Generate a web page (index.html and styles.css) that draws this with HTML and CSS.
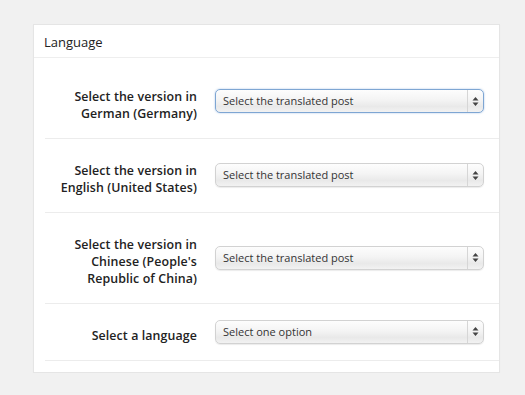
FILE: index.html
```html
<!DOCTYPE html>
<html lang="en">
<head>
<meta charset="utf-8">
<title>Language</title>
<link rel="stylesheet" href="styles.css">
</head>
<body>
<div class="panel">
  <div class="panel-header">Language</div>
  <div class="panel-body">
    <div class="row">
      <div class="label">Select the version in<br>German (Germany)</div>
      <div class="select focused">
        <span class="select-text">Select the translated post</span>
        <span class="select-arrows"><svg width="7" height="11" viewBox="0 0 7 11"><path d="M3.5 1 L6.5 4.5 H0.5 Z M3.5 10 L6.5 6.5 H0.5 Z" fill="#444"/></svg></span>
      </div>
    </div>
    <div class="row">
      <div class="label">Select the version in<br>English (United States)</div>
      <div class="select">
        <span class="select-text">Select the translated post</span>
        <span class="select-arrows"><svg width="7" height="11" viewBox="0 0 7 11"><path d="M3.5 1 L6.5 4.5 H0.5 Z M3.5 10 L6.5 6.5 H0.5 Z" fill="#444"/></svg></span>
      </div>
    </div>
    <div class="row">
      <div class="label">Select the version in<br>Chinese (People's<br>Republic of China)</div>
      <div class="select">
        <span class="select-text">Select the translated post</span>
        <span class="select-arrows"><svg width="7" height="11" viewBox="0 0 7 11"><path d="M3.5 1 L6.5 4.5 H0.5 Z M3.5 10 L6.5 6.5 H0.5 Z" fill="#444"/></svg></span>
      </div>
    </div>
    <div class="row">
      <div class="label">Select a language</div>
      <div class="select">
        <span class="select-text">Select one option</span>
        <span class="select-arrows"><svg width="7" height="11" viewBox="0 0 7 11"><path d="M3.5 1 L6.5 4.5 H0.5 Z M3.5 10 L6.5 6.5 H0.5 Z" fill="#444"/></svg></span>
      </div>
    </div>
  </div>
</div>
</body>
</html>
```
FILE: styles.css
```css
html, body {
  margin: 0;
  padding: 0;
  background: #f1f1f1;
  font-family: "Open Sans", "Liberation Sans", sans-serif;
  color: #222;
}

.panel {
  margin: 24px 0 0 33px;
  width: 467px;
  box-sizing: border-box;
  background: #fff;
  border: 1px solid #e5e5e5;
  box-shadow: 0 1px 1px rgba(0,0,0,0.04);
}

.panel-header {
  height: 33px;
  box-sizing: border-box;
  padding: 8px 0 0 10px;
  font-size: 13px;
  line-height: 18px;
  color: #222;
  border-bottom: 1px solid #eeeeee;
}

.panel-body {
  padding: 7px 0 11px 11px;
}

.row {
  display: grid;
  grid-template-columns: 152px 269px;
  column-gap: 18px;
  align-items: center;
  padding: 23px 0 16px 0;
  border-bottom: 1px solid #ececec;
}

.label {
  text-align: right;
  font-size: 12.4px;
  letter-spacing: 0.1px;
  font-weight: 600;
  line-height: 17px;
  color: #222;
}

.select {
  display: flex;
  align-items: stretch;
  height: 24px;
  box-sizing: border-box;
  margin: -9px 0 -1px 0;
  border: 1px solid #d2d2d2;
  border-radius: 5px;
  background: linear-gradient(#fdfdfd 0%, #f4f4f4 45%, #e9e9e9 75%, #f2f2f2 100%);
  box-shadow: 0 1px 1px rgba(0,0,0,0.08);
}

.select.focused {
  border-color: #7ea6d3;
  box-shadow: 0 0 2px rgba(90,140,210,0.55);
}

.select-text {
  flex: 1;
  padding-left: 7px;
  font-size: 11px;
  line-height: 22px;
  color: #333;
  white-space: nowrap;
  overflow: hidden;
}

.select-arrows {
  width: 15px;
  border-left: 1px solid #d6d6d6;
  display: flex;
  align-items: center;
  justify-content: center;
}

.select-arrows svg {
  display: block;
}
```
